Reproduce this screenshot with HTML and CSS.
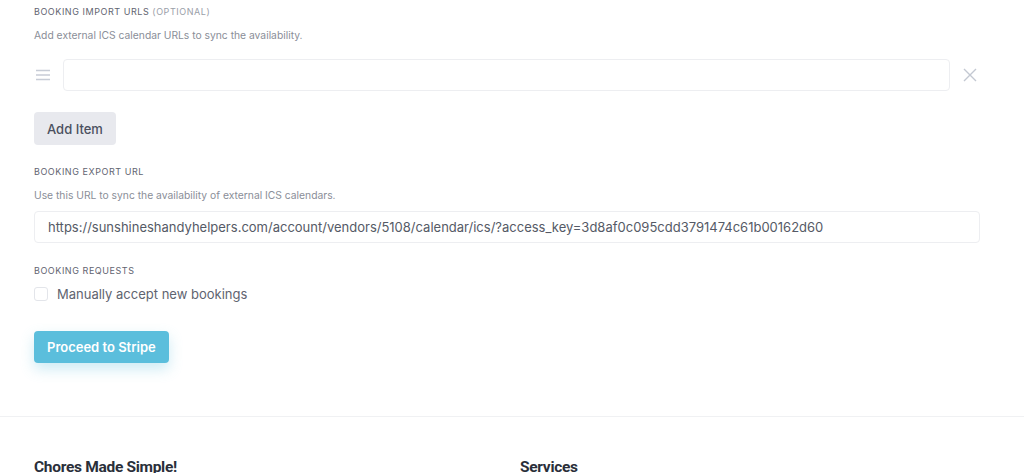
FILE: index.html
```html
<!DOCTYPE html>
<html lang="en">
<head>
<meta charset="utf-8">
<title>Booking settings</title>
<link rel="stylesheet" href="styles.css">
</head>
<body>
<main class="form">
  <section class="field">
    <div class="label">Booking Import URLs <span class="optional">(Optional)</span></div>
    <p class="help">Add external ICS calendar URLs to sync the availability.</p>
    <div class="repeater-row">
      <span class="drag">
        <svg width="14" height="12" viewBox="0 0 14 12"><path d="M0 1.5h14M0 6h14M0 10.5h14" stroke="#c7ccd6" stroke-width="1.4" fill="none"/></svg>
      </span>
      <div class="input"></div>
      <span class="remove">
        <svg width="14" height="14" viewBox="0 0 14 14"><path d="M1 1l12 12M13 1L1 13" stroke="#c3c8d2" stroke-width="1.4" fill="none"/></svg>
      </span>
    </div>
    <button class="btn-secondary" type="button">Add Item</button>
  </section>

  <section class="field">
    <div class="label">Booking Export URL</div>
    <p class="help">Use this URL to sync the availability of external ICS calendars.</p>
    <div class="input input-wide">https://sunshineshandyhelpers.com/account/vendors/5108/calendar/ics/?access_key=3d8af0c095cdd3791474c61b00162d60</div>
  </section>

  <section class="field field-requests">
    <div class="label">Booking Requests</div>
    <label class="check"><span class="box"></span>Manually accept new bookings</label>
  </section>

  <button class="btn-primary" type="button">Proceed to Stripe</button>
</main>

<footer class="footer">
  <h3>Chores Made Simple!</h3>
  <h3>Services</h3>
</footer>
</body>
</html>
```

FILE: styles.css
```css
* { box-sizing: border-box; }
html, body { margin: 0; padding: 0; background: #fff; }
body {
  font-family: "Inter", "Liberation Sans", sans-serif;
  color: #4b5060;
  overflow: hidden;
}
.form {
  padding: 6px 44px 0 34px;
  display: flex;
  flex-direction: column;
  align-items: flex-start;
}
.field { width: 100%; }
.label {
  font-size: 9px;
  letter-spacing: 0.55px;
  text-transform: uppercase;
  color: #5f6470;
  line-height: 12px;
}
.optional { color: #9a9ea8; }
.help {
  margin: 11px 0 0;
  font-size: 10.3px;
  color: #8a8e98;
  line-height: 13px;
}
.repeater-row {
  display: flex;
  align-items: center;
  gap: 13px;
  margin-top: 17px;
  padding-left: 2px;
  padding-right: 3px;
}
.drag, .remove { display: flex; align-items: center; }
.input {
  flex: 1;
  height: 32px;
  border: 1px solid #edeef1;
  border-radius: 4px;
  background: #fff;
  padding: 0 13px;
  font-size: 13px;
  line-height: 30px;
  color: #555a66;
  white-space: nowrap;
  overflow: hidden;
}
.btn-secondary {
  margin-top: 21px;
  height: 33px;
  padding: 0 13px;
  border: none;
  border-radius: 4px;
  background: #e8e9ee;
  color: #4b5060;
  font-family: inherit;
  font-size: 13px;
  font-weight: 500;
}
.field + .field { margin-top: 21px; }
.input-wide { margin-top: 9px; }
.field-requests { margin-top: 22px !important; }
.check {
  display: flex;
  align-items: center;
  gap: 9px;
  margin-top: 9px;
  font-size: 13px;
  color: #5f6470;
}
.box {
  width: 14px;
  height: 14px;
  border: 1px solid #e3e5ea;
  border-radius: 3px;
}
.btn-primary {
  margin-top: 29px;
  height: 32px;
  padding: 0 13px;
  border: none;
  border-radius: 4px;
  background: #5bbedc;
  color: #fff;
  font-family: inherit;
  font-size: 13px;
  font-weight: 600;
  box-shadow: 0 6px 14px rgba(91, 190, 220, 0.3);
}
.footer {
  margin-top: 53px;
  border-top: 1px solid #f0f1f3;
  padding: 41px 34px 0;
  display: grid;
  grid-template-columns: 486px 1fr;
}
.footer h3 {
  margin: 0;
  font-family: "Roboto", "Liberation Sans", sans-serif;
  font-size: 15.5px;
  font-weight: 700;
  color: #2a2f3a;
  letter-spacing: -0.3px;
  line-height: 18px;
}
```
